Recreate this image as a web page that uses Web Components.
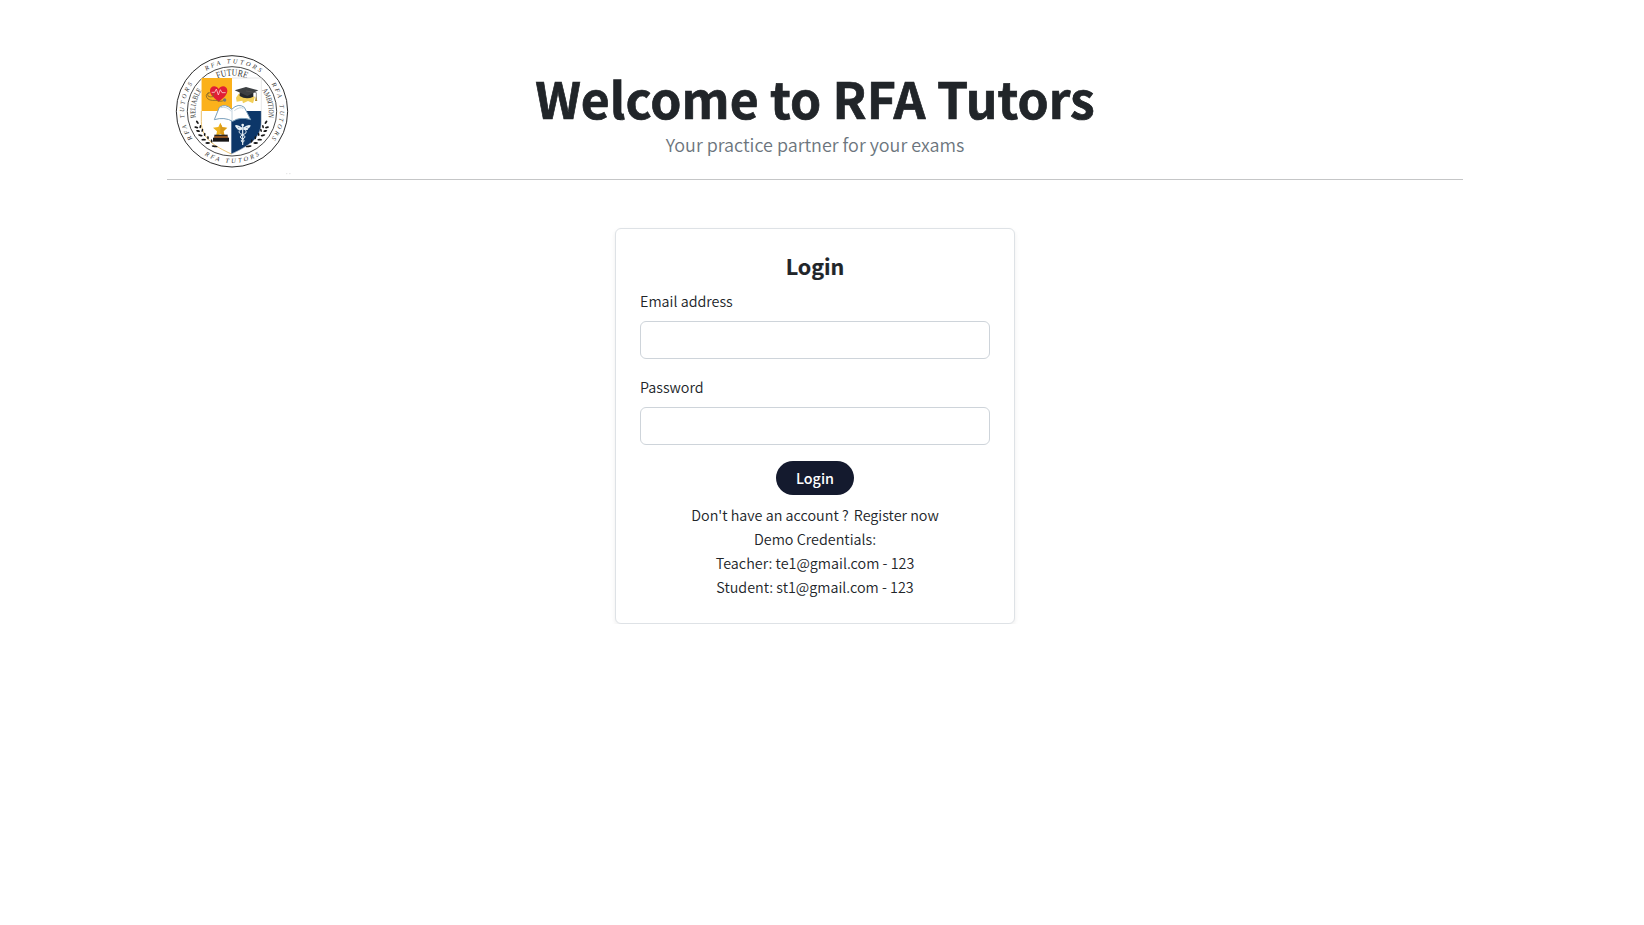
<!DOCTYPE html>
<html lang="en">
<head>
<meta charset="utf-8">
<title>RFA Tutors</title>
<style>
html,body{margin:0;background:#fff}
body{font:350 14.35px/24px "Noto Sans CJK JP","Noto Sans CJK SC","Noto Sans",sans-serif;color:#212529;width:1629px}
</style>
</head>
<body>
<rfa-page></rfa-page>
<script>
function define(name, html){
  const t=document.createElement('template');
  t.innerHTML=html;
  customElements.define(name, class extends HTMLElement{
    constructor(){super();this.attachShadow({mode:'open'}).append(t.content.cloneNode(true));}
    connectedCallback(){
      const l=this.shadowRoot.querySelector('input');
      if(l){l.type=this.getAttribute('type')||'text';}
    }
  });
}

define('rfa-logo', `
<style>:host{display:block;width:125px;height:125px}svg{display:block;width:100%;height:100%}text{font-family:"Liberation Serif",serif;fill:#333}</style>
<svg width="125" height="125" viewBox="21 30 375 375" aria-label="RFA Tutors emblem">
  <defs>
    <path id="top" d="M72 214A144 144 0 0 1 360 214"/>
    <path id="left" d="M216 358A144 144 0 0 1 216 70"/>
    <path id="right" d="M216 70A144 144 0 0 1 216 358"/>
    <path id="bottom" d="M61 214A155 155 0 0 0 371 214"/>
    <path id="mid" d="M109 214A107 107 0 0 1 323 214"/>
    <path id="midl" d="M216 324A110 110 0 0 1 216 104"/>
    <path id="midr" d="M216 104A110 110 0 0 1 216 324"/>
    <clipPath id="shield"><path d="M124 114H304V245C304 296 265 318 214 342C163 318 124 296 124 245Z"/></clipPath>
  </defs>
  <circle cx="216" cy="214" r="167" fill="#fff" stroke="#1b1b1b" stroke-width="2.800"/>
  <circle cx="216" cy="214" r="134" fill="none" stroke="#222" stroke-width="2.500"/>
  <g font-size="19" font-style="italic" text-anchor="middle">
    <text><textPath href="#top" startOffset="51%" textLength="172">RFA TUTORS</textPath></text>
    <text><textPath href="#left" startOffset="50%" textLength="175">RFA TUTORS</textPath></text>
    <text><textPath href="#right" startOffset="50%" textLength="175">RFA TUTORS</textPath></text>
    <text><textPath href="#bottom" startOffset="50%" textLength="174">RFA TUTORS</textPath></text>
  </g>
  <g font-size="29" text-anchor="middle">
    <text><textPath href="#mid" startOffset="50%" textLength="90" lengthAdjust="spacingAndGlyphs">FUTURE</textPath></text>
    <text font-size="23"><textPath href="#midl" startOffset="57%" textLength="87" lengthAdjust="spacingAndGlyphs">RELIABLE</textPath></text>
    <text font-size="23"><textPath href="#midr" startOffset="43%" textLength="87" lengthAdjust="spacingAndGlyphs">AMBITION</textPath></text>
  </g>
  <g clip-path="url(#shield)">
    <path fill="#fff" d="M120 110H308V345H120Z"/>
    <path fill="#fbb11b" d="M120 110H216V213H120Z"/>
    <path fill="#0d3769" d="M214 213H308V345H214Z"/>
  </g>
  <path d="M124 213V245C124 296 163 318 214 342" fill="none" stroke="#e7b650" stroke-width="2.500"/>
  <path d="M216 114H304V213" fill="none" stroke="#ddd" stroke-width="2"/>
  <path d="M304 213V245C304 296 265 318 214 342" fill="none" stroke="#b5bcc8" stroke-width="2"/>
  <path d="M176 185C158 171 150 162 150 152C150 136 169 134 176 147C183 134 202 137 202 152C202 163 192 173 176 185Z" fill="#e11d35"/>
  <path d="M155 157H164L169 147L175 165L181 149L186 158H197" fill="none" stroke="#f8c9cd" stroke-width="2.500"/>
  <path d="M150 158Q135 161 140 172Q145 183 168 181Q185 187 192 180M145 157Q137 174 160 170L162 159" fill="none" stroke="#7f662a" stroke-width="2.500"/>
  <circle cx="194" cy="180" r="5" fill="#777"/>
  <path d="M228 173L236 161L285 170L279 190L264 183L249 190L247 182L230 185Z" fill="#f3cf57"/>
  <path d="M239 157V168Q259 181 280 170V154" fill="#24272b"/>
  <path d="M224 151L258 141L295 151L262 168Z" fill="#3d4043"/>
  <path d="M258 153L289 158V178" fill="none" stroke="#555" stroke-width="2"/>
  <path d="M288 169L292 183H285Z" fill="#b28a24"/>
  <path d="M163 239L178 202Q196 189 215 208Q235 188 253 202L272 239Q240 229 218 244Q193 230 163 239Z" fill="#fff" stroke="#7aa0bc" stroke-width="3" stroke-linejoin="round"/>
  <path d="M216 209V241M182 203Q201 198 213 214M223 212Q239 199 250 205" fill="none" stroke="#a5bfd0" stroke-width="2"/>
  <path d="M181 248L187 261L202 263L191 274L194 289L181 282L168 289L171 274L159 263L175 261Z" fill="#eeb21e"/>
  <path d="M181 250V280L194 288L190 274L200 264L187 262Z" fill="#d9991a"/>
  <path d="M163 284H203V294H163Z" fill="#2b2420"/><path d="M159 293H207V305H159Z" fill="#171515"/><path d="M163 289H203V293H163Z" fill="#c56e24"/>
  <g fill="none" stroke="#e5eff5" stroke-width="3">
    <path d="M248 256V315" stroke-width="3.500"/>
    <path d="M246 265Q232 256 228 258Q232 268 246 267Q236 269 233 267M250 265Q264 256 269 258Q264 268 250 267Q260 269 263 267" stroke-width="5"/>
    <path d="M240 271Q232 279 248 284Q262 291 248 297Q239 303 249 308M256 271Q264 279 248 284Q234 291 248 297Q257 303 247 308"/>
  </g>
  <circle cx="248" cy="255" r="4" fill="#eaf2f6"/>
  <g fill="#161616">
    <g id="leaves">
      <ellipse cx="112" cy="247" rx="6" ry="2.800" transform="rotate(55 112 247)"/>
      <ellipse cx="109" cy="262" rx="6" ry="2.800" transform="rotate(12 109 262)"/>
      <ellipse cx="121" cy="260" rx="5" ry="2.500" transform="rotate(105 121 260)"/>
      <ellipse cx="114" cy="273" rx="6" ry="2.800" transform="rotate(14 114 273)"/>
      <ellipse cx="127" cy="271" rx="5" ry="2.500" transform="rotate(103 127 271)"/>
      <ellipse cx="121" cy="286" rx="7" ry="2.800" transform="rotate(12 121 286)"/>
      <ellipse cx="134" cy="283" rx="5" ry="2.500" transform="rotate(96 134 283)"/>
      <ellipse cx="131" cy="299" rx="7" ry="2.800"/>
      <ellipse cx="144" cy="293" rx="5" ry="2.500" transform="rotate(85 144 293)"/>
      <ellipse cx="143" cy="309" rx="7" ry="2.800"/>
      <ellipse cx="155" cy="303" rx="5" ry="2.500" transform="rotate(75 155 303)"/>
      <ellipse cx="164" cy="319" rx="9" ry="2.500" transform="rotate(8 164 319)"/>
    </g>
    <use href="#leaves" transform="matrix(-1 0 0 1 430 0)"/>
  </g>
  <path d="M378 401H382M387 401H392" stroke="#e5e5e5" stroke-width="3"/>
</svg>`);

define('rfa-header', `
<style>
:host{display:grid;grid-template-columns:125px 1fr 125px;height:129px;padding-top:50px;border-bottom:1px solid #c5c6c7}
.copy{text-align:center;padding:14px 0 0 1px}
h1{margin:0;font-size:49.900px;line-height:67px;font-weight:700;white-space:nowrap;-webkit-text-stroke:.7px #212529}
p{margin:0;padding-top:1px;font-size:17.950px;line-height:24px;color:#6c757d}
</style>
<rfa-logo></rfa-logo>
<div class="copy"><h1><slot name="title"></slot></h1><p><slot name="tagline"></slot></p></div>`);

define('rfa-field', `
<style>
:host{display:block;margin-bottom:16px}
label{display:block;margin-bottom:8px;padding-left:.5px}
input{display:block;box-sizing:border-box;width:100%;height:38px;padding:6px 12px;border:1px solid #ced4da;border-radius:6px;background:#fff;font:inherit;outline:0}
</style>
<label for="field"><slot></slot></label><input id="field">`);

define('rfa-button', `
<style>
:host{display:block}
button{display:block;box-sizing:border-box;width:78px;height:34px;margin:0 auto;padding:0 0 0 1px;border:0;border-radius:17px;background:#141a2e;color:#fff;font:500 14.350px/34px "Noto Sans CJK JP",sans-serif}
</style><button type="button"><slot></slot></button>`);

define('rfa-card', `
<style>
:host{display:block;box-sizing:border-box;width:400px;height:396px;margin:48px auto 0;padding:23px 24px 24px;border:1px solid #dee2e6;border-radius:6px;background:#fff;box-shadow:0 2px 4px rgba(0,0,0,.075)}
h2{margin:0 0 9px;padding-left:1px;font-size:21.500px;line-height:28px;text-align:center;font-weight:700;-webkit-text-stroke:.2px #212529}
.notes{text-align:center;margin-top:8px;padding-left:1px}.notes div{height:24px}.register{margin-left:2px}
</style>
<h2>Login</h2>
<rfa-field type="email">Email address</rfa-field>
<rfa-field type="password">Password</rfa-field>
<rfa-button>Login</rfa-button>
<div class="notes">
  <div>Don't have an account ? <span class="register">Register now</span></div>
  <div>Demo Credentials:</div>
  <div>Teacher: te1@gmail.com - 123</div>
  <div>Student: st1@gmail.com - 123</div>
</div>`);

define('rfa-page', `
<style>:host{display:block;width:1296px;margin:0 auto}</style>
<rfa-header><span slot="title">Welcome to RFA Tutors</span><span slot="tagline">Your practice partner for your exams</span></rfa-header>
<rfa-card></rfa-card>`);
</script>
</body>
</html>
